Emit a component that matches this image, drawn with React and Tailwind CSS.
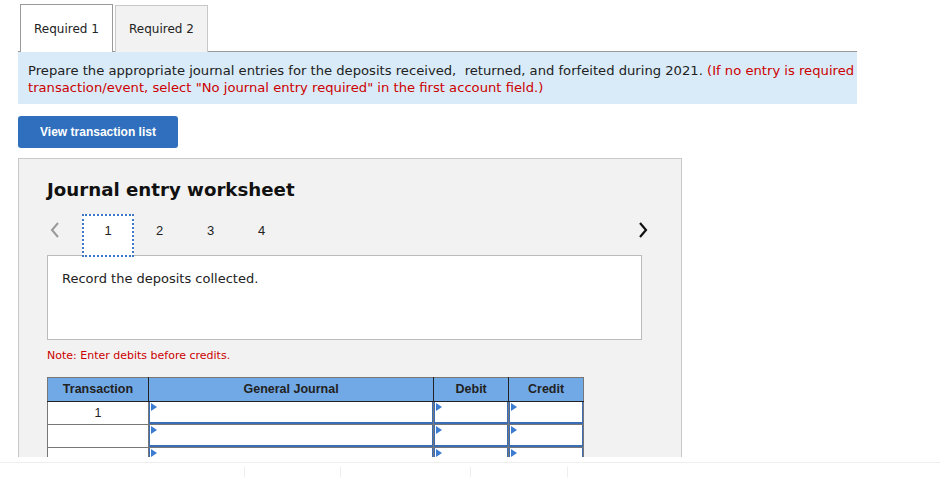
import React from "react";

const verdana = { fontFamily: '"DejaVu Sans", Verdana, sans-serif' };
const arial = { fontFamily: '"Liberation Sans", Arial, sans-serif' };

function Flag() {
  return (
    <span className="absolute left-[1px] top-[1px] w-0 h-0 border-t-[4px] border-b-[4px] border-l-[6px] border-t-transparent border-b-transparent border-l-[#3b7bd0]" />
  );
}

function InputCell({ w }) {
  return (
    <td className={`p-0 border border-[#777] ${w}`}>
      <div className="relative h-[22px] bg-white border-l border-b-2 border-r border-[#3a6db3]">
        <Flag />
      </div>
    </td>
  );
}

export default function App() {
  const rows = ["1", "", ""];
  return (
    <div className="w-[940px] h-[477px] overflow-hidden bg-white" style={verdana}>
      <div className="h-[457px] overflow-hidden">
        {/* Tabs */}
        <div className="flex items-end pl-[20px] pt-[4px] h-[52px]">
          <div className="w-[93px] h-[48px] border border-b-0 border-[#9a9a9a] bg-white flex items-center justify-center text-[12px] text-[#222] relative z-10">
            Required 1
          </div>
          <div className="ml-[2px] w-[93px] h-[47px] border border-[#c8c8c8] border-b-0 bg-[#f2f2f2] flex items-center justify-center text-[12px] text-[#222]">
            Required 2
          </div>
        </div>
        <div className="ml-[18px] w-[839px] -mt-[1px] border-t border-[#999] bg-[#d9ebf8] pt-[10px] pb-[8px] pl-[10px] pr-0 text-[13.15px] leading-[17px] text-[#222] whitespace-pre overflow-hidden">
          <div>
            Prepare the appropriate journal entries for the deposits received,  returned, and forfeited during 2021.{" "}
            <span className="text-[#cc0000]">(If no entry is required</span>
          </div>
          <div className="text-[#cc0000]">
            transaction/event, select "No journal entry required" in the first account field.)
          </div>
        </div>

        {/* Button */}
        <div className="ml-[18px] mt-[12px] w-[160px] h-[32px] rounded-[3px] bg-[#2f6fbd] flex items-center justify-center text-white text-[12px] font-bold" style={arial}>
          View transaction list
        </div>

        {/* Worksheet panel */}
        <div className="ml-[18px] mt-[10px] w-[664px] h-[400px] border border-[#c8c8c8] bg-[#f2f2f2] pl-[28px] pr-[39px] pt-[20px]">
          <div className="text-[18.2px] leading-[22px] font-bold text-[#111]">Journal entry worksheet</div>

          <div className="relative z-10 mt-[13px] flex items-start h-[43px]">
            <div className="w-[35px] h-full flex items-start pt-[7px] pl-[2px]">
              <svg width="12" height="18" viewBox="0 0 12 18">
                <path d="M9 2 L3 9 L9 16" fill="none" stroke="#999" strokeWidth="2" />
              </svg>
            </div>
            <div className="w-[52px] h-full bg-white border-2 border-dotted border-[#3c78c8] flex justify-center pt-[7px] text-[13px] leading-[16px] text-[#222]" style={arial}>
              1
            </div>
            {["2", "3", "4"].map((n) => (
              <div key={n} className="w-[51px] h-full flex justify-center pt-[9px] text-[13px] leading-[16px] text-[#222]" style={arial}>
                {n}
              </div>
            ))}
            <div className="flex-1" />
            <div className="w-[18px] h-full flex justify-center pt-[7px] mr-[-10px]">
              <svg width="12" height="18" viewBox="0 0 12 18">
                <path d="M3 2 L9 9 L3 16" fill="none" stroke="#111" strokeWidth="2.2" />
              </svg>
            </div>
          </div>

          <div className="-mt-[2px] h-[85px] bg-white border border-[#bbb] pl-[14px] pt-[14px] text-[13px] leading-[17px] text-[#222]">
            Record the deposits collected.
          </div>

          <div className="mt-[9px] text-[11px] leading-[14px] text-[#cc0000]">Note: Enter debits before credits.</div>

          <table className="mt-[14px] border-collapse w-[537px] text-[12.5px]" style={arial}>
            <thead>
              <tr className="bg-[#71a9e6] h-[24px] text-[#222] font-bold">
                <th className="w-[101px] border border-[#777] border-r-[#222] border-b-[#222] font-bold">Transaction</th>
                <th className="w-[286px] border border-[#777] border-r-[#222] border-b-[#222] font-bold">General Journal</th>
                <th className="w-[75px] border border-[#777] border-r-[#222] border-b-[#222] font-bold">Debit</th>
                <th className="w-[75px] border border-[#777] border-b-[#222] font-bold">Credit</th>
              </tr>
            </thead>
            <tbody>
              {rows.map((r, i) => (
                <tr key={i} className="h-[23px]">
                  <td className="p-0 border border-[#777] bg-white text-center text-[#222] text-[12.5px]">{r}</td>
                  <InputCell w="w-[286px]" />
                  <InputCell w="w-[75px]" />
                  <InputCell w="w-[75px]" />
                </tr>
              ))}
            </tbody>
          </table>
        </div>
      </div>

      {/* clipped area below */}
      <div className="mt-[5px] border-t border-[#eee] h-[15px] relative">
        <div className="absolute top-[4px] left-[244px] w-px h-[12px] bg-[#eee]" />
        <div className="absolute top-[4px] left-[340px] w-px h-[12px] bg-[#eee]" />
        <div className="absolute top-[4px] left-[470px] w-px h-[12px] bg-[#eee]" />
        <div className="absolute top-[4px] left-[567px] w-px h-[12px] bg-[#eee]" />
      </div>
    </div>
  );
}
